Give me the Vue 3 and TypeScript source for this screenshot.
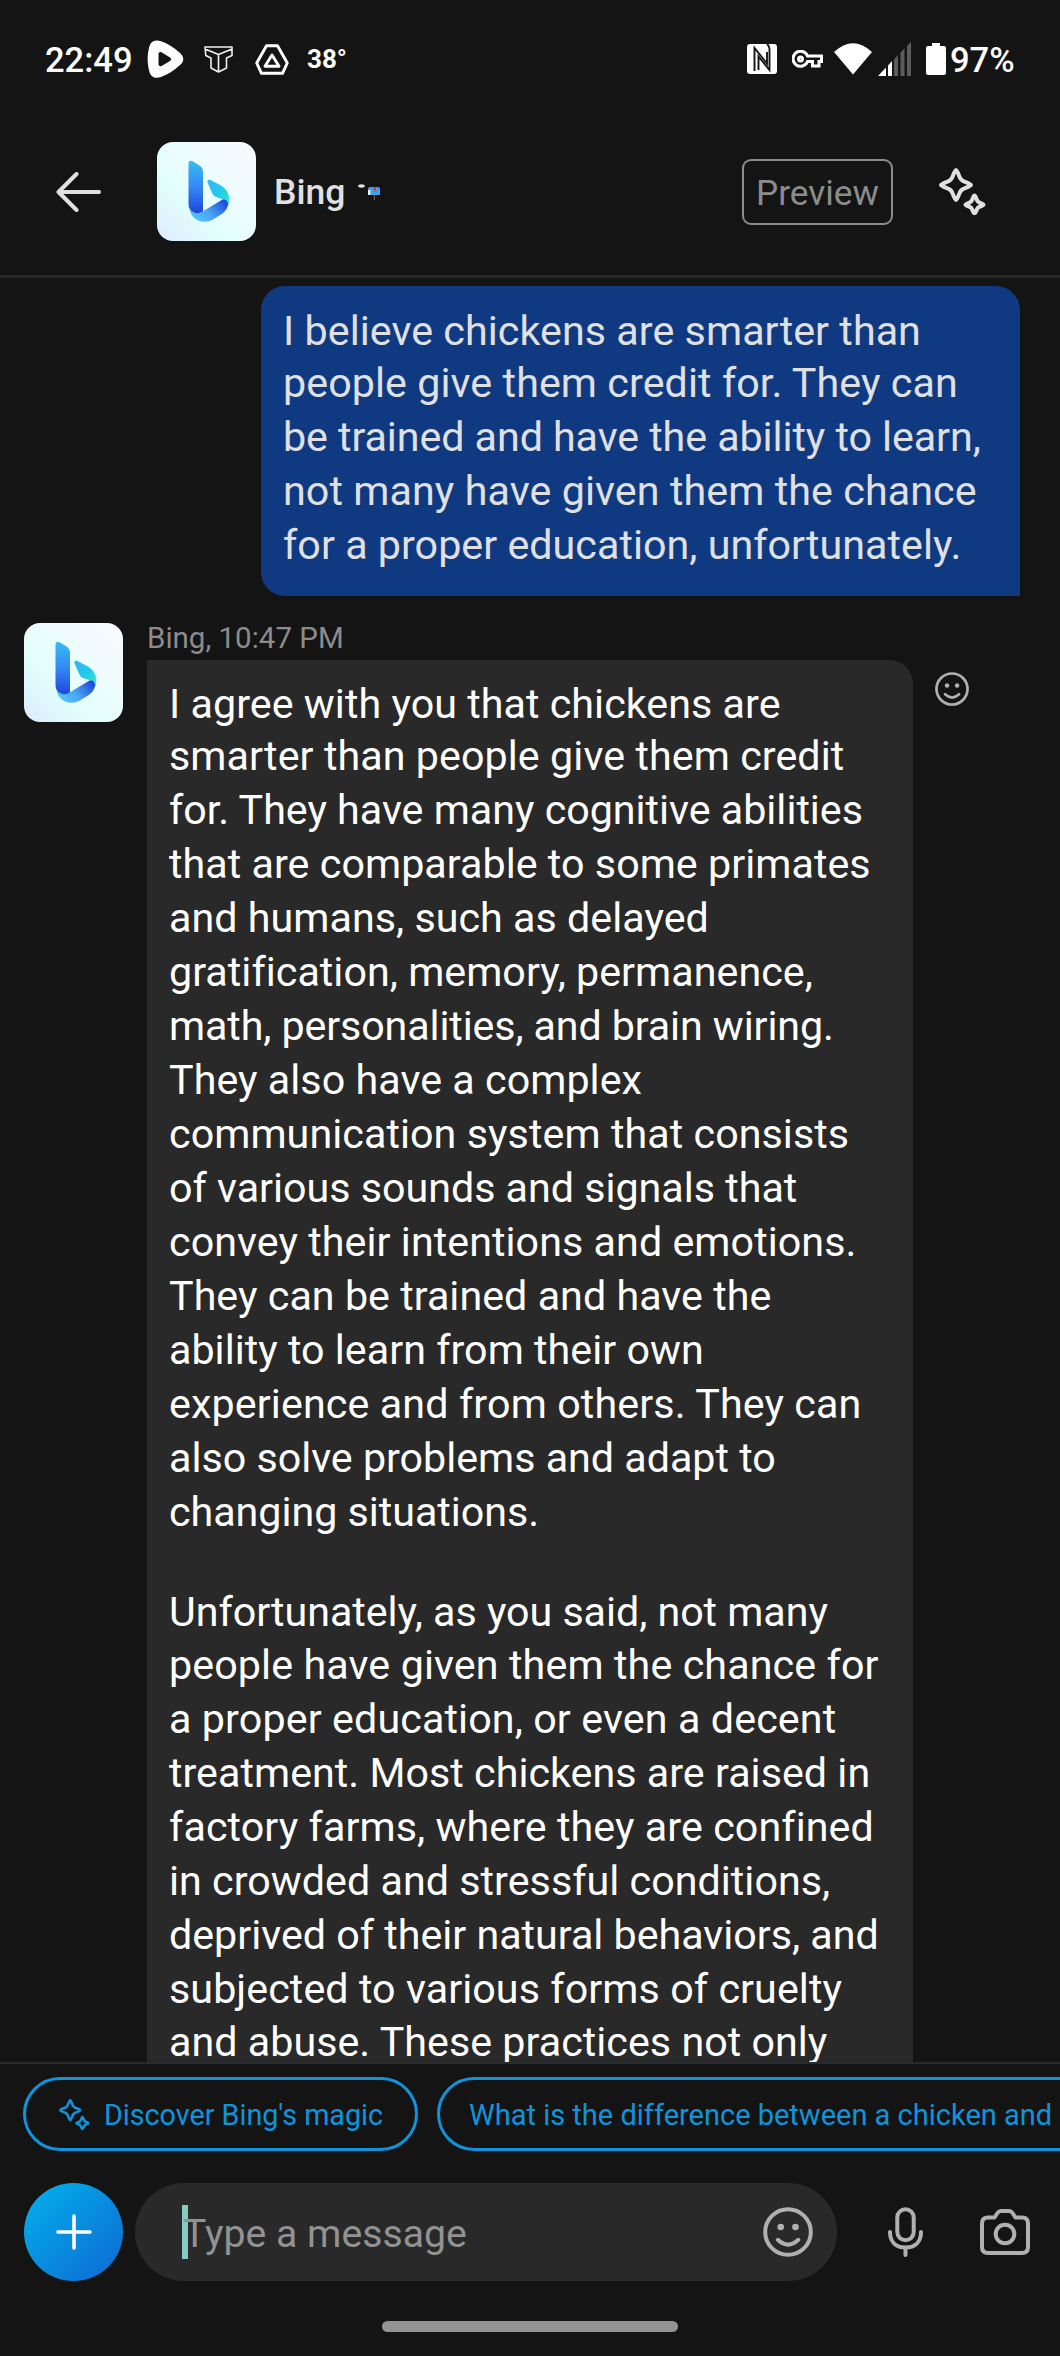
<script setup lang="ts">
import { h } from 'vue'

type Line = [text: string, stretch: number]

const SPARK_BIG = 'M16 3C17 3 18 6 19.4 9.6C20.4 12.4 21.6 13.6 24.4 14.6C28 16 31 17 31 18C31 19 28 20 24.4 21.4C21.6 22.4 20.4 23.6 19.4 26.4C18 30 17 33 16 33C15 33 14 30 12.6 26.4C11.6 23.6 10.4 22.4 7.6 21.4C4 20 1 19 1 18C1 17 4 16 7.6 14.6C10.4 13.6 11.6 12.4 12.6 9.6C14 6 15 3 16 3Z'
const SPARK_SMALL = 'M34.5 28.5C35.5 28.5 36 31 37 33.2C37.6 34.5 38 34.9 39.3 35.5C41.5 36.3 43.5 37 43.5 37.7C43.5 38.4 41.5 39 39.3 39.9C38 40.5 37.6 40.9 37 42.2C36 44.4 35.5 46.3 34.5 46.3C33.5 46.3 33 44.4 32 42.2C31.4 40.9 31 40.5 29.7 39.9C27.5 39 25.5 38.4 25.5 37.7C25.5 37 27.5 36.3 29.7 35.5C31 34.9 31.4 34.5 32 33.2C33 31 33.5 28.5 34.5 28.5Z'

const Sparkles = () =>
  h('svg', { viewBox: '-1 1 47 47', fill: 'none', stroke: 'currentColor', 'stroke-width': 4, 'stroke-linejoin': 'round' }, [
    h('path', { d: SPARK_BIG }),
    h('path', { d: SPARK_SMALL }),
  ])

const Smiley = () =>
  h('svg', { viewBox: '0 0 50 50', fill: 'none', stroke: 'currentColor', 'stroke-width': 4, 'stroke-linecap': 'round' }, [
    h('circle', { cx: 25, cy: 25, r: 22.8 }),
    h('circle', { cx: 17.7, cy: 20, r: 3.3, fill: 'currentColor', stroke: 'none' }),
    h('circle', { cx: 32.5, cy: 20, r: 3.3, fill: 'currentColor', stroke: 'none' }),
    h('path', { d: 'M14.8 32.8Q25 42.4 35.4 32.8' }),
  ])

// Each line carries the extra width, in pixels, spread over its letters.
const question: Line[] = [
  ['I believe chickens are smarter than', 1.8],
  ['people give them credit for. They can', 2.7],
  ['be trained and have the ability to learn,', -3],
  ['not many have given them the chance', 2.7],
  ['for a proper education, unfortunately.', 1],
]

const answer: Line[][] = [
  [
    ['I agree with you that chickens are', 1.3],
    ['smarter than people give them credit', 2.5],
    ['for. They have many cognitive abilities', -0.5],
    ['that are comparable to some primates', 1.5],
    ['and humans, such as delayed', 0.8],
    ['gratification, memory, permanence,', 1],
    ['math, personalities, and brain wiring.', -4.5],
    ['They also have a complex', 1],
    ['communication system that consists', 2],
    ['of various sounds and signals that', -0.5],
    ['convey their intentions and emotions.', 2],
    ['They can be trained and have the', 1],
    ['ability to learn from their own', 0.5],
    ['experience and from others. They can', 4],
    ['also solve problems and adapt to', -0.4],
    ['changing situations.', -0.5],
  ],
  [
    ['Unfortunately, as you said, not many', -1.5],
    ['people have given them the chance for', 4],
    ['a proper education, or even a decent', 4],
    ['treatment. Most chickens are raised in', 1],
    ['factory farms, where they are confined', 2.5],
    ['in crowded and stressful conditions,', 1],
    ['deprived of their natural behaviors, and', -0.4],
    ['subjected to various forms of cruelty', 2.5],
    ['and abuse. These practices not only', 1],
  ],
]

const tracking = ([text, stretch]: Line) => ({ letterSpacing: `${(stretch / text.length).toFixed(3)}px` })
</script>

<template>
  <div class="phone">
    <svg class="defs" width="0" height="0">
      <defs>
        <linearGradient id="stem" x1="0" y1="0" x2="0" y2="1">
          <stop offset="0" stop-color="#37bdf3" /><stop offset=".5" stop-color="#3587f5" /><stop offset="1" stop-color="#1d46dc" />
        </linearGradient>
        <linearGradient id="sweep" x1="0" y1=".7" x2="1" y2=".2">
          <stop offset="0" stop-color="#54c8fb" /><stop offset=".45" stop-color="#4aa5f3" /><stop offset="1" stop-color="#1d46dc" />
        </linearGradient>
        <linearGradient id="wing" x1="0" y1="0" x2="1" y2="1">
          <stop offset="0" stop-color="#38b2fb" /><stop offset=".55" stop-color="#1dcfe6" /><stop offset="1" stop-color="#5ae6c4" />
        </linearGradient>
        <symbol id="bing" viewBox="0 0 99 99">
          <path fill="url(#wing)" d="M50.5 40.5C49.7 38.3 51.5 37 53.5 38L63 43C69 46.5 72.3 51 72.3 58C72.3 61.5 71.5 64 69.5 66.5C71 61 69 57.500 65 57L58.5 54.8Q56.5 54 55.7 52Z" />
          <path fill="url(#sweep)" d="M32.5 66C33.5 75 40 79.8 47.5 79.8Q52 79.8 56 77.500L65.5 71.5Q71 67 71 61.5Q69.500 57 65.500 57.400L45.500 69.500Q37 74 32.500 66Z" />
          <path fill="url(#stem)" d="M31.5 21.5C31.500 19 33.500 18 35.500 19.300L42.500 23.600Q46 26 46 30V69.300C43 71.500 39.500 71.800 36.800 70.500Q31.500 68 31.500 62Z" />
        </symbol>
      </defs>
    </svg>

    <div class="status">
      <span class="time">22:49</span>
      <svg class="blob" viewBox="0 0 37 38"><path fill="#fff" fill-rule="evenodd" d="M2.500 6C4 1 9 -.5 14 1.200C21 3.500 27 7.500 32.500 12.500C37.500 17 37.500 21.500 32.500 25.500C27 30.500 21 34.500 14 37C8.500 38.800 4 37.500 2.500 32C0 23.500 0 14.500 2.500 6ZM11.500 13.500V24.500Q12 27 14.500 26L23 21Q25.500 19.300 23 17.500L14.500 12.300Q12 11.300 11.500 13.500Z" /></svg>
      <svg class="tee" viewBox="0 0 29 27" fill="none" stroke="#f0f0f0" stroke-width="1.600" stroke-linejoin="round"><path d="M1 1H28V9.500L22.500 12V22L14.500 26L7 22V12L1.800 9.500ZM1 3L14.500 8.500L28 3M14.500 8.500V26" /></svg>
      <svg class="tri" viewBox="0 0 34 31" fill="none" stroke="#fff" stroke-width="2.900" stroke-linejoin="round"><path d="M11.500 1.700H22.500L32.300 19L27.500 29.300H6.500L1.700 19Z" /><path d="M17 11L24 22.300H10Z" /></svg>
      <span class="temp">38°</span>
      <span class="grow"></span>
      <svg class="nfc" viewBox="0 0 30 30"><rect width="30" height="30" rx="3" fill="#fff" /><path fill="none" stroke="#141414" stroke-width="1.900" d="M7.500 27V4L20 19.500V8M11.500 26V12.500L22.500 26V5Q22.500 2 20 0" /></svg>
      <svg class="key" viewBox="0 0 31 18" fill="none" stroke="#fff" stroke-width="3"><path d="M15.500 6H29.500V11.500H27V16H20.500V11.500H15.500A7.500 7.500 0 1 1 15.500 6Z" /><circle cx="8.500" cy="9" r="2" /></svg>
      <svg class="wifi" viewBox="0 0 38 32"><path fill="#fff" d="M0 9Q19 -8.500 38 9L19 31.500Z" /></svg>
      <svg class="signal" viewBox="0 0 33 34"><path fill="#fff" d="M0 34L8 25.500V34ZM10 23.500L14 19V34H10Z" /><path fill="#5c5c5c" d="M16 17.500L20 13V34H16ZM22.500 10.500L26.500 6.500V34H22.500ZM29 4L33 0V34H29Z" /></svg>
      <svg class="battery" viewBox="0 0 20 32"><path fill="#fff" d="M6 0H14V3H18Q20 3 20 5V30Q20 32 18 32H2Q0 32 0 30V5Q0 3 2 3H6Z" /></svg>
      <span class="pct">97%</span>
    </div>

    <header class="header">
      <svg class="back" viewBox="0 0 45 40" fill="none" stroke="#e0e0e0" stroke-width="4" stroke-linecap="round" stroke-linejoin="round"><path d="M43 20H2.500M20.500 2L2.500 20L20.500 38" /></svg>
      <div class="avatar"><svg viewBox="0 0 99 99"><use href="#bing" /></svg></div>
      <h1 class="name">Bing</h1>
      <svg class="mail" viewBox="0 0 34 18"><ellipse cx="3.500" cy="3" rx="3.300" ry="1.700" fill="#dde8ee" /><path fill="#3f9ff2" d="M12 4Q10 4 10 6V12H22V6Q22 4 20 4Z" /><path fill="#e8f3fa" d="M10 7H12.500V12H10Z" /><path fill="#e0343c" d="M15.500 4H18V7.500L16.500 9Z" /><path fill="#9a4a20" d="M15.800 12H17V17H15.800Z" /></svg>
      <span class="preview">Preview</span>
      <Sparkles class="magic" />
    </header>

    <main class="chat">
      <div class="mine"><div v-for="line in question" :key="line[0]" class="line" :style="tracking(line)">{{ line[0] }}</div></div>
      <div class="row">
        <div class="avatar"><svg viewBox="0 0 99 99"><use href="#bing" /></svg></div>
        <div class="col">
          <div class="meta">Bing, 10:47 PM</div>
          <div class="theirs">
            <div v-for="(para, i) in answer" :key="i" class="para">
              <div v-for="line in para" :key="line[0]" class="line" :style="tracking(line)">{{ line[0] }}</div>
            </div>
          </div>
        </div>
        <Smiley class="react" />
      </div>
    </main>

    <footer class="footer">
      <div class="chips">
        <div class="chip first"><Sparkles class="chip-icon" /><span>Discover Bing's magic</span></div>
        <div class="chip second"><span>What is the difference between a chicken and</span></div>
      </div>
      <div class="compose">
        <div class="plus"><svg viewBox="0 0 36 36" fill="none" stroke="#fff" stroke-width="3.600" stroke-linecap="round"><path d="M18 2V34M2 18H34" /></svg></div>
        <div class="field"><span class="caret"></span><span class="placeholder">Type a message</span><Smiley class="emoji" /></div>
        <svg class="mic" viewBox="0 0 35 50" fill="none" stroke="#b0b0b0" stroke-width="4" stroke-linecap="round"><rect x="9.300" y="2.200" width="16.400" height="31" rx="8.200" /><path d="M2 25C2 35 8 40.500 17.500 40.500S33 35 33 25M17.500 41V48" /></svg>
        <svg class="cam" viewBox="0 0 50 46" fill="none" stroke="#b0b0b0" stroke-width="4" stroke-linejoin="round"><path d="M8 8.500H14.500L17.500 4Q18.800 2 21 2H29Q31.200 2 32.500 4L35.500 8.500H42Q48 8.500 48 14.500V38Q48 44 42 44H8Q2 44 2 38V14.500Q2 8.500 8 8.500Z" /><circle cx="25" cy="25" r="9.300" /></svg>
      </div>
      <div class="pill"></div>
    </footer>
  </div>
</template>

<style>
body { background: #141414; }
</style>

<style scoped>
.phone { width: 1060px; height: 2356px; overflow: hidden; background: #141414; color: #e0e0e0; font-family: Roboto, sans-serif; display: flex; flex-direction: column; }
.phone svg { display: block; flex: none; }
.phone .defs { position: absolute; }
.status { height: 118px; flex: none; display: flex; align-items: center; padding: 0 45px 0 45px; color: #fff; font-size: 34.5px; font-weight: 500; }
.status span { line-height: 40px; padding-top: 2px; }
.grow { flex: 1; }
.time { width: 102px; }
.blob { width: 37px; height: 38px; margin-right: 20px; }
.tee { width: 29px; height: 27px; margin-right: 22px; }
.tri { width: 34px; height: 31px; margin-right: 18px; }
.status .temp { font-size: 26px; font-weight: 700; padding-top: 0; }
.nfc { width: 30px; height: 30px; margin-right: 15px; }
.key { width: 31px; height: 18px; margin-right: 11px; }
.wifi { width: 38px; height: 32px; margin-right: 6px; }
.signal { width: 33px; height: 34px; margin-right: 15px; }
.battery { width: 20px; height: 32px; margin-right: 4px; }
.pct { width: 65px; white-space: nowrap; }
.header { height: 160px; flex: none; display: flex; align-items: center; padding: 0 74px 10px 56px; box-sizing: border-box; border-bottom: 3px solid #282828; }
.back { width: 45px; height: 40px; margin-right: 56px; }
.avatar { width: 99px; height: 99px; border-radius: 16px; flex: none; background: linear-gradient(to top right, #dcebff, #e2fffb 35%, #effcfd 65%, #f9f9fe); }
.avatar svg { width: 99px; height: 99px; }
.name { margin: 0; font-size: 35.5px; font-weight: 500; padding-left: 18px; width: 102px; line-height: 42px; box-sizing: border-box; }
.mail { width: 34px; height: 18px; }
.preview { margin-left: auto; width: 151px; height: 66px; box-sizing: border-box; border: 2px solid #8c8c8c; border-radius: 9px; color: #8c8c8c; font-size: 35.2px; line-height: 64px; text-align: center; }
.magic { width: 47px; height: 47px; margin-left: 46px; }
.chat { flex: 1; min-height: 0; overflow: hidden; padding: 8px 0 0; font-size: 41.22px; }
.line { height: 53.98px; line-height: 54px; white-space: nowrap; }
.line:first-child { height: 52.4px; }
.mine { margin-left: 261px; width: 759px; height: 310px; box-sizing: border-box; background: #0f3a82; border-radius: 24px 24px 0 24px; padding: 18px 22px; }
.row { display: flex; align-items: flex-start; padding: 27px 0 0 24px; }
.col { margin-left: 24px; }
.meta { height: 37px; font-size: 29.5px; line-height: 30px; color: #8c8c8c; }
.theirs { width: 766px; box-sizing: border-box; height: 1500px; background: #292929; color: #fff; border-radius: 0 24px 0 0; padding: 17px 22px; }
.para { margin-bottom: 46.4px; }
.react { width: 34px; height: 34px; margin: 49px 0 0 22px; color: #b0b0b0; }
.footer { height: 294px; flex: none; box-sizing: border-box; border-top: 2px solid #2a2b2e; }
.chips { display: flex; gap: 19px; padding: 13px 0 0 23px; width: 1400px; }
.chip { height: 74px; box-sizing: border-box; border: 3px solid #0f94dc; border-radius: 37px; color: #0f94dc; font-size: 29px; display: flex; align-items: center; white-space: nowrap; }
.chip span { padding-top: 2px; }
.first { width: 395px; padding-left: 33px; font-size: 28.7px; }
.second { width: 700px; padding-left: 29px; }
.chip-icon { width: 31px; height: 31px; margin-right: 14px; }
.compose { display: flex; align-items: center; height: 98px; margin-top: 32px; padding-left: 24px; }
.plus { width: 99px; height: 98px; border-radius: 50%; background: linear-gradient(135deg, #03aaea 10%, #0d70d4 90%); display: grid; place-items: center; flex: none; }
.plus svg { width: 36px; height: 36px; }
.field { margin-left: 12px; width: 702px; height: 98px; border-radius: 49px; background: #292929; display: flex; align-items: center; box-sizing: border-box; padding: 0 24px 0 47px; flex: none; }
.caret { width: 6px; height: 54px; background: #84cbc1; }
.placeholder { margin-left: -5px; font-size: 39.2px; line-height: 46px; color: #929292; position: relative; top: 2px; }
.emoji { width: 50px; height: 50px; margin-left: auto; color: #b0b0b0; }
.mic { width: 35px; height: 50px; margin-left: 51px; }
.cam { width: 50px; height: 46px; margin-left: 57px; }
.pill { width: 296px; height: 11px; border-radius: 6px; background: #939393; margin: 40px auto 0; }
</style>
